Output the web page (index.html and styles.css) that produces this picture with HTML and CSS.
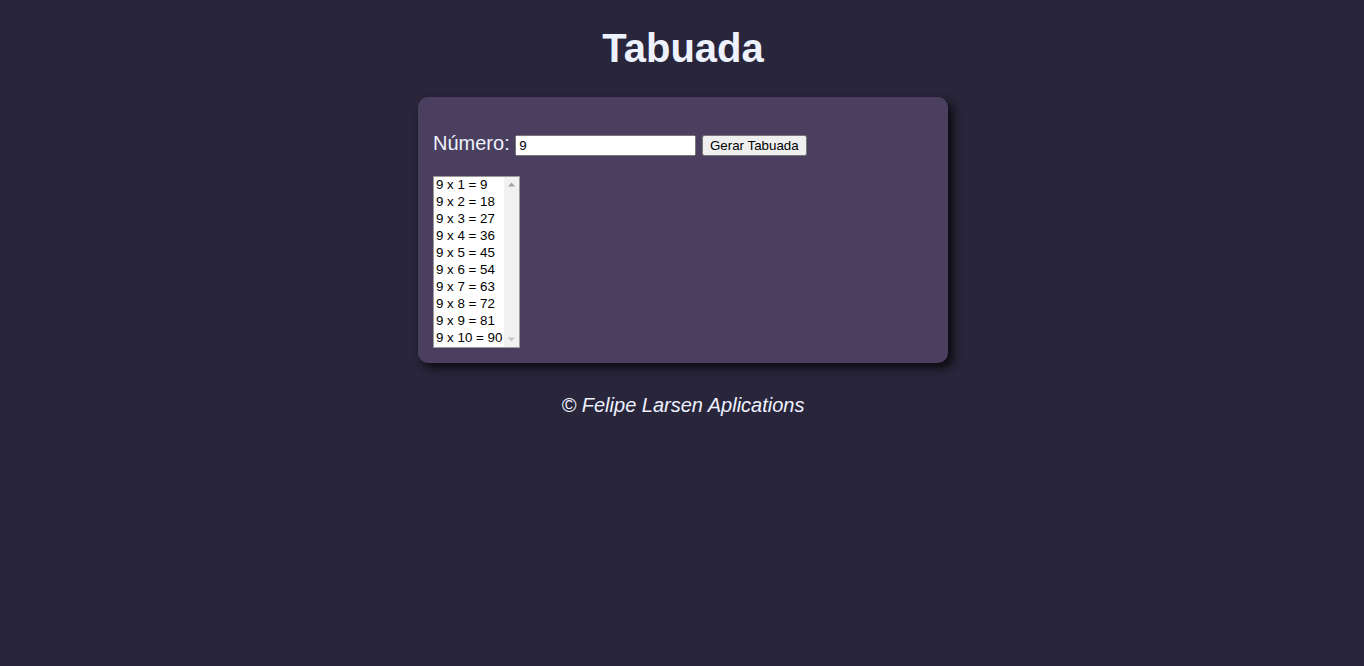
FILE: index.html
```html
<!DOCTYPE html>
<html lang="pt-BR">
<head>
<meta charset="UTF-8">
<title>Tabuada</title>
<link rel="stylesheet" href="styles.css">
</head>
<body>
<header class="topo">
  <h1 class="titulo">Tabuada</h1>
</header>
<section class="cartao">
  <p class="linha">
    Número: <input type="number" class="campo" value="9"> <input type="button" class="botao" value="Gerar Tabuada">
  </p>
  <div class="lista-wrap">
    <div class="lista-box">
      <select class="lista" size="10">
        <option>9 x 1 = 9</option>
        <option>9 x 2 = 18</option>
        <option>9 x 3 = 27</option>
        <option>9 x 4 = 36</option>
        <option>9 x 5 = 45</option>
        <option>9 x 6 = 54</option>
        <option>9 x 7 = 63</option>
        <option>9 x 8 = 72</option>
        <option>9 x 9 = 81</option>
        <option>9 x 10 = 90</option>
      </select>
      <div class="barra" aria-hidden="true">
        <svg class="seta" width="15" height="15" viewBox="0 0 15 15"><polygon points="7.5,5.5 11,9.5 4,9.5" fill="#a3a3a3"/></svg>
        <svg class="seta" width="15" height="15" viewBox="0 0 15 15"><polygon points="4,5.5 11,5.5 7.5,9.5" fill="#c6c6c6"/></svg>
      </div>
    </div>
  </div>
</section>
<footer class="rodape">
  <p class="credito">&copy; Felipe Larsen Aplications</p>
</footer>
</body>
</html>
```

FILE: styles.css
```css
html, body {
  margin: 0;
  padding: 0;
}
body {
  background: #29253a;
  color: #eef2ff;
  font-family: "Liberation Sans", Arial, sans-serif;
  font-size: 20px;
  padding-left: 2px;
}
.topo {
  padding-top: 1px;
}
.titulo {
  text-align: center;
  font-size: 40px;
  line-height: 46px;
  margin: 24px 0 26px;
}
.cartao {
  width: 500px;
  margin: 0 auto;
  padding: 15px;
  background: #4a3f5e;
  border-radius: 10px;
  box-shadow: 5px 5px 10px rgba(0, 0, 0, 0.75);
}
.linha {
  margin: 20px 0;
  line-height: 23px;
}
.campo {
  font-family: "Liberation Sans", Arial, sans-serif;
  font-size: 13.33px;
  width: 173px;
  -moz-appearance: textfield;
}
.campo::-webkit-inner-spin-button,
.campo::-webkit-outer-spin-button {
  -webkit-appearance: none;
  margin: 0;
}
.botao {
  font-family: "Liberation Sans", Arial, sans-serif;
  font-size: 13.33px;
  width: 105px;
}
.lista-wrap {
  display: flex;
}
.lista-box {
  display: flex;
  border: 1px solid #9a9a9a;
  background: #fff;
}
.lista {
  font-family: "Liberation Sans", Arial, sans-serif;
  font-size: 13.33px;
  background: #fff;
  color: #000;
  border: none;
  outline: none;
  margin: 0;
  padding: 0;
  overflow: hidden;
}
.barra {
  width: 15px;
  background: #f1f1f1;
  display: flex;
  flex-direction: column;
  justify-content: space-between;
}
.seta {
  display: block;
}
.rodape {
  text-align: center;
  font-style: italic;
}
.credito {
  margin: 31px 0 0;
}
```
